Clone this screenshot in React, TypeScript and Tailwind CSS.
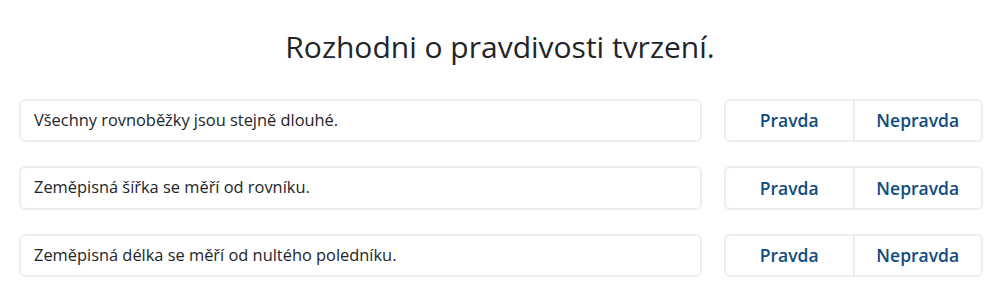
import React from "react";

const items = [
  "Všechny rovnoběžky jsou stejně dlouhé.",
  "Zeměpisná šířka se měří od rovníku.",
  "Zeměpisná délka se měří od nultého poledníku.",
];

export default function App() {
  return (
    <div
      className="w-[1000px] h-[307px] bg-white text-[#212529]"
      style={{ fontFamily: '"Open Sans", "Noto Sans", sans-serif' }}
    >
      <h1 className="pt-[27px] text-center text-[30px] leading-[40px] font-normal text-[#212529]">
        Rozhodni o pravdivosti tvrzení.
      </h1>
      <div className="mt-[31.5px] flex flex-col gap-[24px] pl-[19px] pr-[17px]">
        {items.map((t) => (
          <div key={t} className="flex gap-[22px]">
            <div className="flex-1 h-[43.5px] flex items-center rounded-[6px] border-2 border-[#eeeeee] pl-[13px] text-[16.4px] text-[#212529]">
              {t}
            </div>
            <div className="w-[259px] h-[43.5px] flex rounded-[6px] border-2 border-[#eeeeee]">
              <button className="flex-1 flex items-center justify-center text-[17.5px] font-semibold text-[#0f4c81] border-r-2 border-[#eeeeee]">
                Pravda
              </button>
              <button className="flex-1 flex items-center justify-center text-[17.5px] font-semibold text-[#0f4c81]">
                Nepravda
              </button>
            </div>
          </div>
        ))}
      </div>
    </div>
  );
}
